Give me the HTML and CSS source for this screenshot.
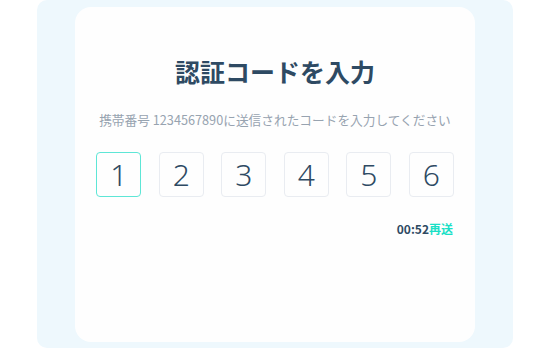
FILE: index.html
```html
<!DOCTYPE html>
<html lang="ja">
<head>
<meta charset="utf-8">
<link rel="stylesheet" href="styles.css">
</head>
<body>
<div class="panel">
  <div class="card">
    <h1 class="title">認証コードを入力</h1>
    <p class="subtitle">携帯番号 1234567890に送信されたコードを入力してください</p>
    <div class="codes">
      <div class="box active">1</div>
      <div class="box">2</div>
      <div class="box">3</div>
      <div class="box">4</div>
      <div class="box">5</div>
      <div class="box">6</div>
    </div>
    <div class="resend"><span class="timer">00:52</span><span class="link">再送</span></div>
  </div>
</div>
</body>
</html>
```
FILE: styles.css
```css
html, body {
  margin: 0;
  padding: 0;
  background: #ffffff;
}
body {
  width: 550px;
  height: 348px;
  overflow: hidden;
  font-family: "Noto Sans CJK JP", "Noto Sans", sans-serif;
}
.panel {
  margin-left: 37px;
  width: 476px;
  height: 348px;
  box-sizing: border-box;
  padding: 7px 38px 6px 38px;
  background: #eef8fd;
  border-radius: 10px;
}
.card {
  height: 335px;
  background: #fefefe;
  border-radius: 16px;
  display: flex;
  flex-direction: column;
  align-items: center;
}
.title {
  margin: 47px 0 0 0;
  font-size: 25px;
  line-height: 34px;
  font-weight: 700;
  color: #2e4a63;
}
.subtitle {
  margin: 23px 0 0 0;
  font-size: 12.7px;
  line-height: 18px;
  color: #97a3b0;
}
.codes {
  margin-top: 23px;
  display: flex;
  gap: 17.5px;
}
.box {
  width: 45px;
  height: 45px;
  box-sizing: border-box;
  border: 1px solid #e9ecf1;
  border-radius: 4px;
  display: flex;
  align-items: center;
  justify-content: center;
  font-family: "Noto Sans", sans-serif;
  font-weight: 300;
  font-size: 30px;
  color: #2e4a63;
}
.box.active {
  border-color: #5ee6d6;
}
.resend {
  align-self: flex-end;
  margin: 24px 22px 0 0;
  font-size: 12px;
  line-height: 16px;
  font-weight: 700;
}
.timer {
  color: #2e4a63;
}
.link {
  color: #19e0c6;
}
```
